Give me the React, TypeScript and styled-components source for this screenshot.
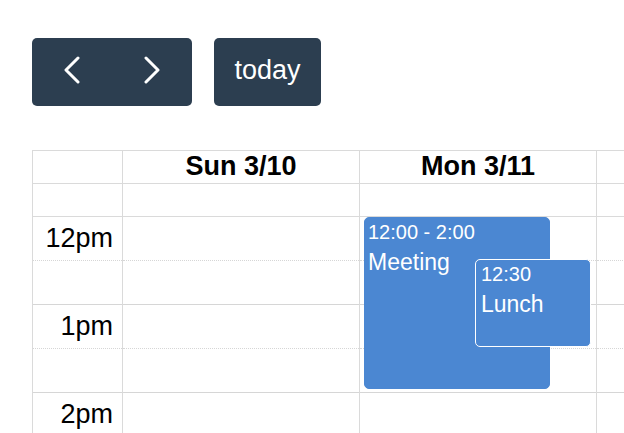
import React from "react";
import styled, { createGlobalStyle } from "styled-components";

const Global = createGlobalStyle`
  html, body { margin: 0; padding: 0; background: #fff; overflow: hidden; }
  body { font-family: "Liberation Sans", Arial, sans-serif; color: #000; }
`;

const Page = styled.div`
  width: 624px;
  height: 433px;
  overflow: hidden;
  padding: 38px 0 0 32px;
  box-sizing: border-box;
  font-size: 27px;
`;

const Toolbar = styled.div`
  display: flex;
  gap: 22px;
  height: 68px;
  margin-bottom: 44px;
`;

const ButtonGroup = styled.div`
  display: flex;
  border-radius: 5px;
  overflow: hidden;
`;

const Button = styled.button<{ $w: number; $solo?: boolean }>`
  height: 68px;
  width: ${(p) => p.$w}px;
  border: none;
  background: #2c3e50;
  color: #fff;
  font-family: "Liberation Sans", Arial, sans-serif;
  font-size: 27px;
  line-height: 31px;
  padding: 0 0 4px;
  display: flex;
  align-items: center;
  justify-content: center;
  border-radius: ${(p) => (p.$solo ? "5px" : "0")};
`;

const Grid = styled.div`
  display: grid;
  grid-template-columns: 90px repeat(3, 237px);
  width: max-content;
  border-top: 1px solid #dadada;
  border-left: 1px solid #dadada;
`;

const HeadCell = styled.div`
  height: 32px;
  line-height: 31px;
  border-right: 1px solid #dadada;
  border-bottom: 1px solid #dadada;
  font-weight: bold;
  text-align: center;
  white-space: nowrap;
`;

const AllDayCell = styled.div`
  height: 32px;
  border-right: 1px solid #dadada;
  border-bottom: 1px solid #dadada;
`;

const Column = styled.div`
  position: relative;
  border-right: 1px solid #dadada;
`;

const Slot = styled.div<{ $minor: boolean }>`
  height: 43px;
  border-bottom: 1px ${(p) => (p.$minor ? "dotted" : "solid")} #d6d6d6;
`;

const AxisSlot = styled(Slot)`
  display: flex;
  align-items: center;
  justify-content: flex-end;
  padding-right: 9px;
  line-height: 31px;
  white-space: nowrap;
`;

const Event = styled.div<{ $bordered?: boolean }>`
  position: absolute;
  box-sizing: border-box;
  background: #4b87d2;
  color: #fff;
  border-radius: 5px;
  border: 1px solid ${(p) => (p.$bordered ? "#fff" : "#4b87d2")};
  padding: 2px ${(p) => (p.$bordered ? "5px" : "3px")};
  overflow: hidden;
`;

const EventTime = styled.div`
  font-size: 20px;
  line-height: 24px;
  white-space: nowrap;
`;

const EventTitle = styled.div`
  font-size: 23px;
  line-height: 26px;
  margin-top: 5px;
  white-space: nowrap;
`;

const Chevron = ({ dir }: { dir: "left" | "right" }) => (
  <svg width="16" height="28" viewBox="0 0 16 28" fill="none">
    <polyline
      points={dir === "left" ? "14,2 2,14 14,26" : "2,2 14,14 2,26"}
      stroke="#fff"
      strokeWidth="3"
      strokeLinecap="round"
      strokeLinejoin="round"
    />
  </svg>
);

const days = ["Sun 3/10", "Mon 3/11", "Tue 3/12"];
const slotLabels = ["12pm", "", "1pm", "", "2pm", ""];

export default function App() {
  return (
    <Page>
      <Global />
      <Toolbar>
        <ButtonGroup>
          <Button $w={80} aria-label="prev">
            <Chevron dir="left" />
          </Button>
          <Button $w={80} aria-label="next">
            <Chevron dir="right" />
          </Button>
        </ButtonGroup>
        <Button $w={107} $solo>
          today
        </Button>
      </Toolbar>
      <Grid>
        <HeadCell />
        {days.map((d) => (
          <HeadCell key={d}>{d}</HeadCell>
        ))}
        <AllDayCell />
        {days.map((d) => (
          <AllDayCell key={d} />
        ))}
        <Column>
          {slotLabels.map((l, i) => (
            <AxisSlot key={i} $minor={i % 2 === 0}>
              {l}
            </AxisSlot>
          ))}
        </Column>
        {days.map((d, di) => (
          <Column key={d}>
            {slotLabels.map((_, i) => (
              <Slot key={i} $minor={i % 2 === 0} />
            ))}
            {di === 1 && (
              <>
                <Event style={{ left: 4, top: 0, width: 186, height: 172 }}>
                  <EventTime>12:00 - 2:00</EventTime>
                  <EventTitle>Meeting</EventTitle>
                </Event>
                <Event $bordered style={{ left: 115, top: 42, width: 116, height: 88 }}>
                  <EventTime>12:30</EventTime>
                  <EventTitle>Lunch</EventTitle>
                </Event>
              </>
            )}
          </Column>
        ))}
      </Grid>
    </Page>
  );
}
